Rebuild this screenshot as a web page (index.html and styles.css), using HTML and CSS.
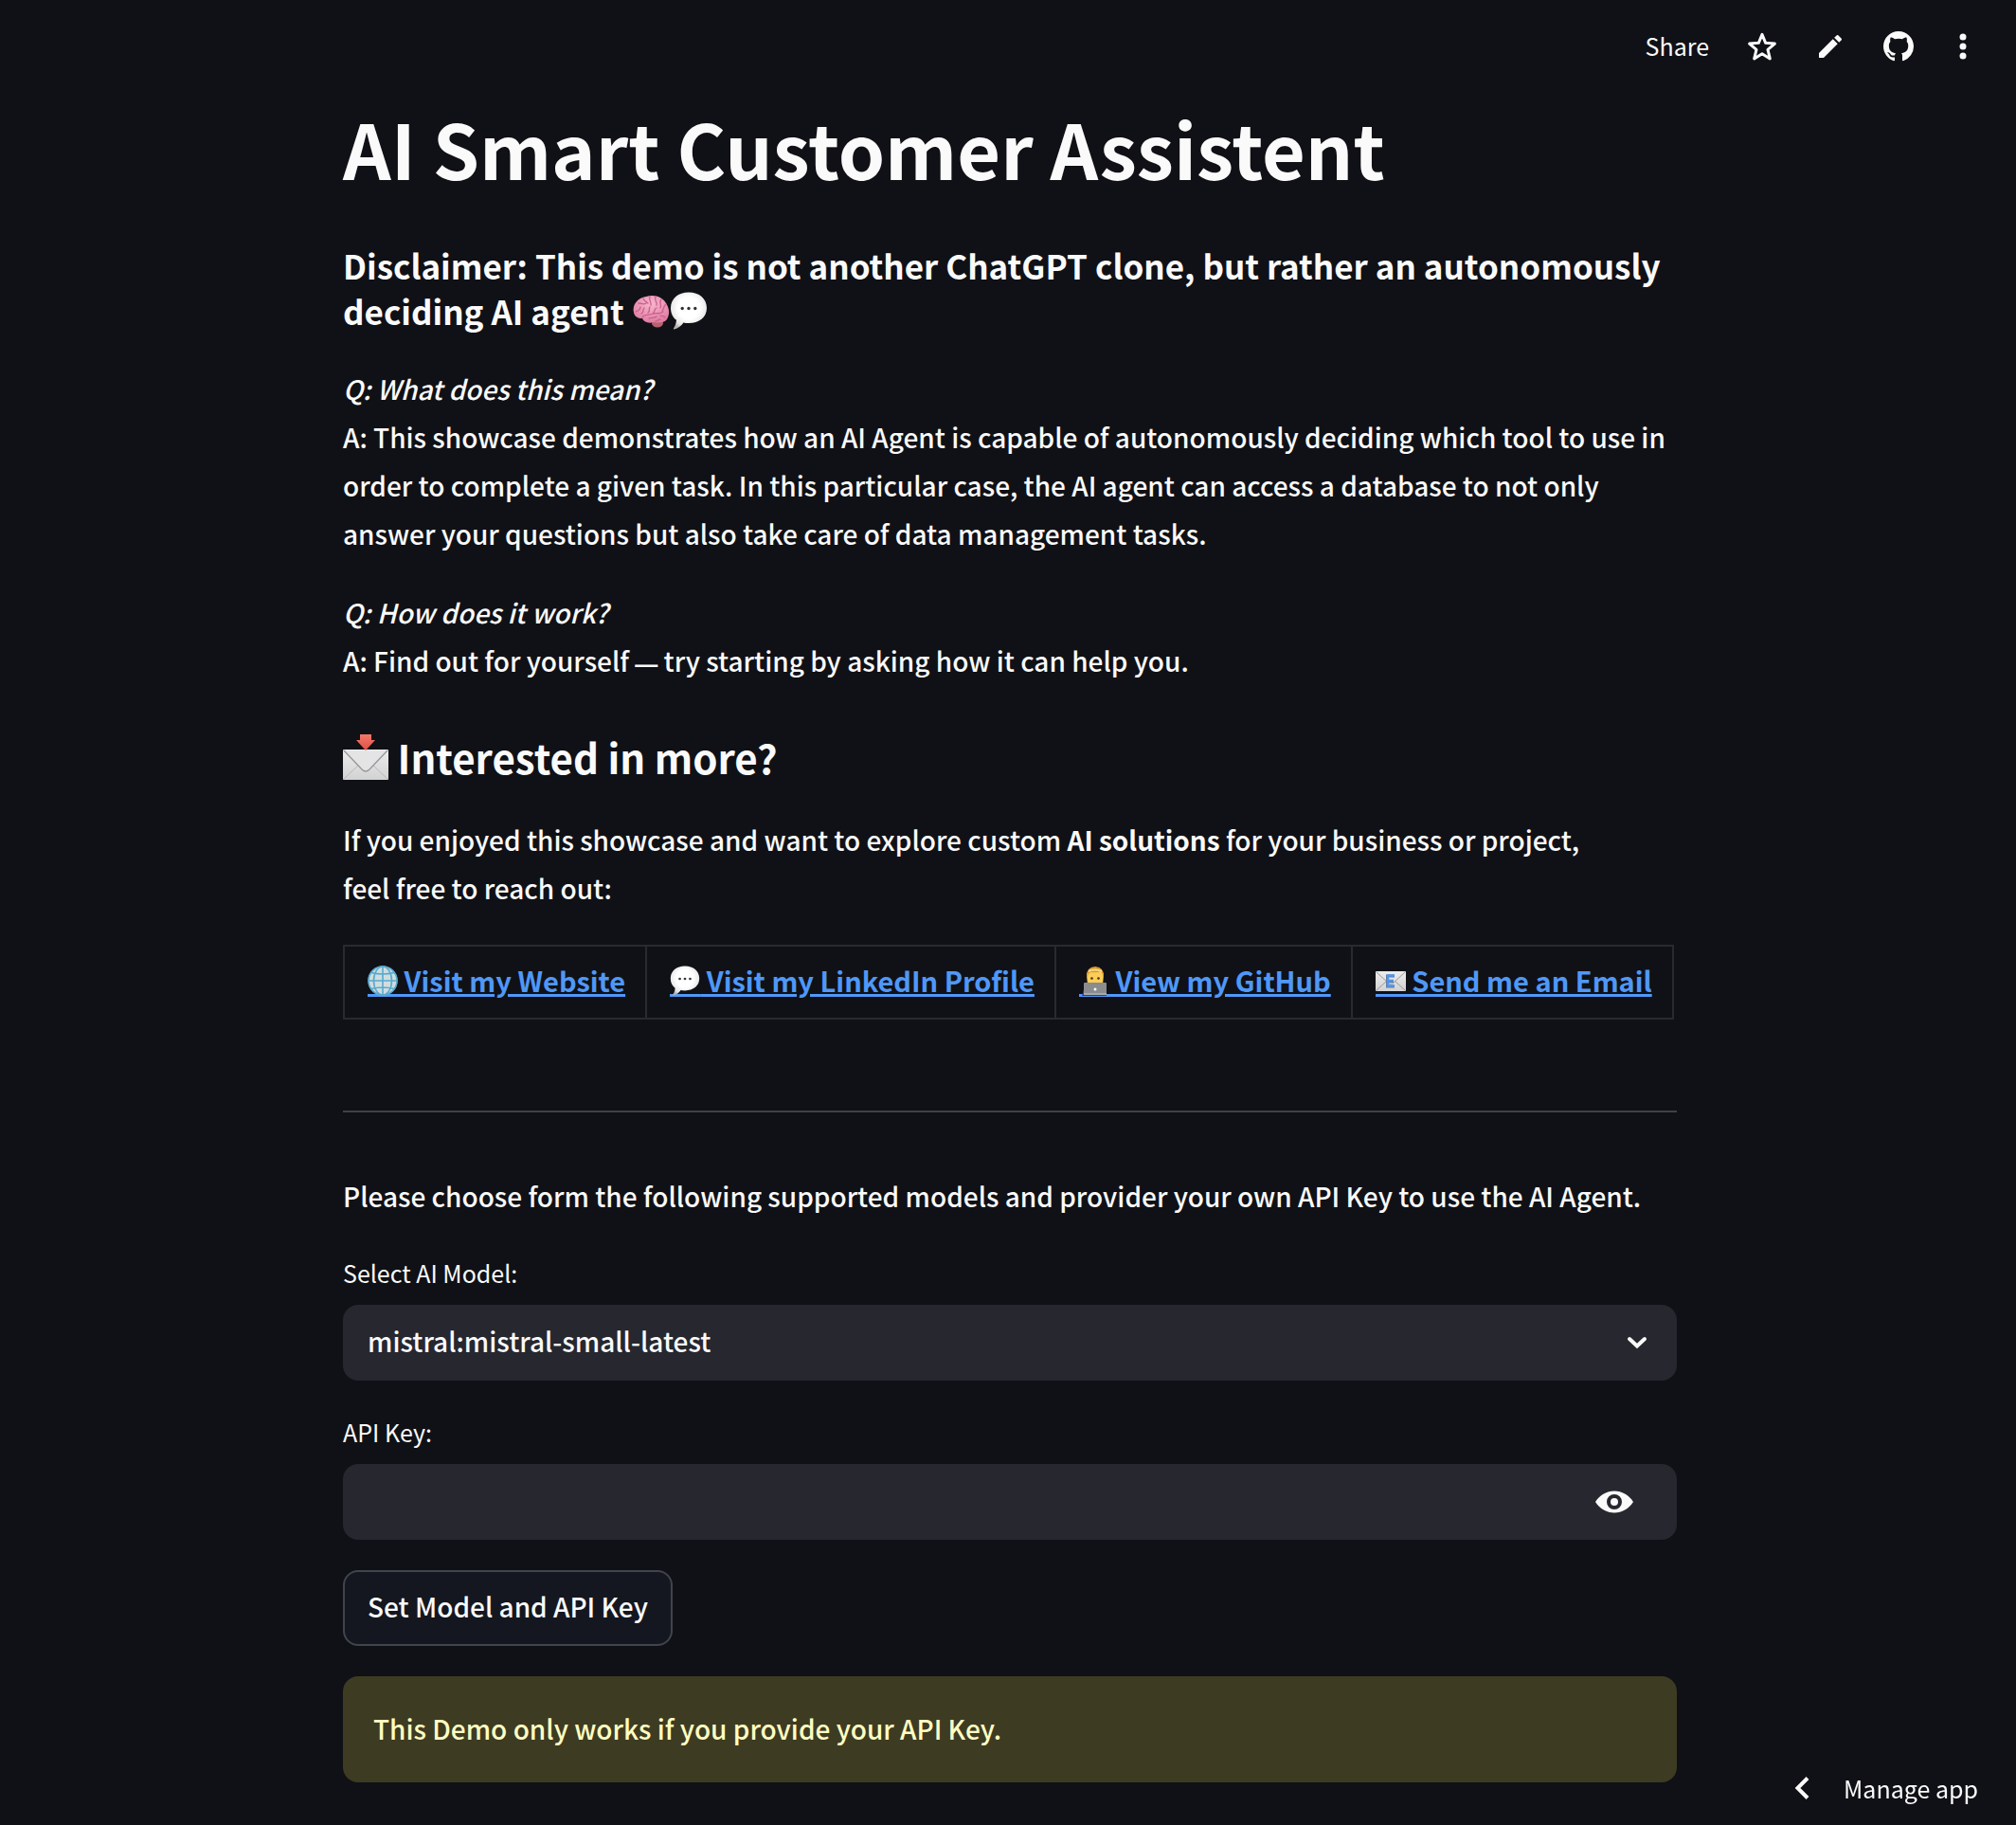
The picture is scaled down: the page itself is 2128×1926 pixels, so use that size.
FILE: index.html
```html
<!DOCTYPE html>
<html lang="en">
<head>
<meta charset="utf-8">
<meta name="viewport" content="width=device-width, initial-scale=1">
<title>AI Smart Customer Assistent</title>
<link rel="stylesheet" href="styles.css">
</head>
<body>
<svg class="defs" aria-hidden="true">
  <defs>
    <radialGradient id="bubble-fill" cx=".5" cy=".42" r=".6">
      <stop offset=".5" stop-color="#fff"/><stop offset=".85" stop-color="#e6e6e6"/><stop offset="1" stop-color="#b4b4b4"/>
    </radialGradient>
    <linearGradient id="paper" x1="0" y1="0" x2="0" y2="1">
      <stop offset="0" stop-color="#ececec"/><stop offset="1" stop-color="#d2d2d2"/>
    </linearGradient>
    <radialGradient id="brain-fill" cx=".5" cy=".3" r=".7">
      <stop offset="0" stop-color="#f9b6cd"/><stop offset="1" stop-color="#df7ba2"/>
    </radialGradient>
    <linearGradient id="arrow-fill" x1="0" y1="0" x2="0" y2="1">
      <stop offset="0" stop-color="#f3796b"/><stop offset="1" stop-color="#dd5145"/>
    </linearGradient>
    <symbol id="bubble" viewBox="0 0 40 40">
      <path d="M20 .5C31 .5 39 7 39 17S31 33 20 33c-2 0-4-.2-5.600-.6C12.500 35.500 9 38.500 4.500 39.500 4 39.600 3.600 39 4 38.500 5.800 36 6.800 33 7 29.800 3.200 27 1 22.500 1 17 1 7 9 .5 20 .5z" fill="url(#bubble-fill)"/>
      <circle cx="13.200" cy="17.500" r="1.700" fill="#333"/><circle cx="20" cy="17.500" r="1.700" fill="#333"/><circle cx="26.800" cy="17.500" r="1.700" fill="#333"/>
    </symbol>
  </defs>
</svg>

<header class="toolbar">
  <button class="toolbar-btn share" type="button">Share</button>
  <button class="toolbar-btn" type="button" aria-label="Favorite">
    <svg width="32" height="32" viewBox="0 0 32 32"><path d="M16 3.400l3.700 8.900 9.700.8-7.400 6.200 2.300 9.600L16 23.700l-8.300 5.200L10 19.300l-7.400-6.200 9.700-.8z" fill="none" stroke="currentColor" stroke-width="3" stroke-linejoin="round"/></svg>
  </button>
  <button class="toolbar-btn" type="button" aria-label="Edit">
    <svg width="32" height="32" viewBox="0 0 24 24"><path d="M3 17.250V21h3.750L17.810 9.940l-3.750-3.750L3 17.250zM20.710 7.040c.39-.39.39-1.020 0-1.410l-2.340-2.340c-.39-.39-1.020-.39-1.410 0l-1.830 1.830 3.750 3.750 1.830-1.830z" fill="currentColor"/></svg>
  </button>
  <button class="toolbar-btn" type="button" aria-label="GitHub">
    <svg width="32" height="32" viewBox="0 0 16 16"><path d="M8 0C3.580 0 0 3.580 0 8c0 3.540 2.290 6.530 5.470 7.590.4.070.55-.17.55-.38 0-.19-.01-.82-.01-1.490-2.010.37-2.530-.49-2.690-.94-.09-.23-.48-.94-.82-1.130-.28-.15-.68-.52-.01-.53.63-.01 1.080.58 1.230.82.72 1.210 1.870.87 2.330.66.07-.52.28-.87.51-1.070-1.780-.2-3.640-.89-3.640-3.950 0-.87.31-1.590.82-2.150-.08-.2-.36-1.020.08-2.120 0 0 .67-.21 2.200.82.64-.18 1.320-.27 2-.27s1.360.09 2 .27c1.530-1.040 2.200-.82 2.200-.82.44 1.100.16 1.920.08 2.120.51.56.82 1.270.82 2.150 0 3.070-1.870 3.750-3.650 3.950.29.25.54.73.54 1.480 0 1.070-.01 1.930-.01 2.200 0 .21.15.46.55.38A8.010 8.010 0 0 0 16 8c0-4.420-3.580-8-8-8z" fill="currentColor"/></svg>
  </button>
  <button class="toolbar-btn" type="button" aria-label="Main menu">
    <svg width="24" height="32" viewBox="0 0 24 32"><circle cx="12" cy="6" r="3.500" fill="currentColor"/><circle cx="12" cy="16" r="3.500" fill="currentColor"/><circle cx="12" cy="26" r="3.500" fill="currentColor"/></svg>
  </button>
</header>

<main class="content">
  <h1>AI Smart Customer Assistent</h1>

  <h3>Disclaimer: This demo is not another ChatGPT clone, but rather an autonomously deciding AI agent <svg class="emoji emoji-h3" viewBox="0 0 40 40" role="img" aria-label="brain"><ellipse cx="27" cy="33" rx="6" ry="4.500" fill="#b9626c"/><path d="M2 22C0 14 6 6 15 5 24 2 33 6 36 12c4 6 4 12 1 17-3 4-9 4-14 3-6 2-11-1-12-4-5 0-8-2-9-6z" fill="url(#brain-fill)"/><g fill="none" stroke="#c9608a" stroke-width="1.300" stroke-linecap="round"><path d="M4 21c3-1 5-2 5-5M7 12c3 0 5 2 8 0M12 7c1 3 3 3 5 5M19 5c-2 4 2 5 1 9M25 5c-2 4 2 5 1 9M31 8c-3 3 1 5-1 9M36 13c-3 2-2 5-4 7M11 27c2-4 7-2 11-4 4-1 7 1 11-2M13 17c-2 3 0 4-3 6M19 16c-2 2 1 4-2 6M26 17c-3 1-1 4-4 6M18 28c3-1 6 0 8-2M30 25c2 1 4 0 5 2M25 31c2 0 3-2 5-2"/></g></svg><svg class="emoji emoji-h3" viewBox="0 0 40 40" role="img" aria-label="speech balloon"><use href="#bubble" width="40" height="40"/></svg></h3>

  <p><em>Q: What does this mean?</em><br>
  A: This showcase demonstrates how an AI Agent is capable of autonomously deciding which tool to use in order to complete a given task. In this particular case, the AI agent can access a database to not only answer your questions but also take care of data management tasks.</p>

  <p><em>Q: How does it work?</em><br>
  A: Find out for yourself <span class="dash">—</span> try starting by asking how it can help you.</p>

  <h2><svg class="emoji emoji-h2" viewBox="0 0 48 48" role="img" aria-label="envelope with arrow"><rect y="16" width="48" height="32" rx="1" fill="url(#paper)"/><path d="M1 47l17-16M47 47L30 31" stroke="#b9b9bc" stroke-width="1" fill="none"/><path d="M1 17l19 20q4 4 8 0l19-20" stroke="#96979d" stroke-width="1.300" fill="#e4e4e5"/><path d="M18 0h12v6h4L24 17 14 6h4z" fill="url(#arrow-fill)"/></svg> Interested in more?</h2>

  <p>If you enjoyed this showcase and want to explore custom <strong>AI solutions</strong> for your business or project,<br>
  feel free to reach out:</p>

  <table class="links">
    <tbody>
      <tr>
        <td><a href="#website"><svg class="emoji emoji-link" viewBox="0 0 32 34" role="img" aria-label="globe"><path d="M0 30h32v3H0z" fill="currentColor"/><circle cx="16" cy="16" r="15.500" fill="#cfdde0"/><g fill="none" stroke="#58a9ce" stroke-width="1.600"><circle cx="16" cy="16" r="15"/><ellipse cx="16" cy="16" rx="9.500" ry="15"/><path d="M16 1v30M1 16h30M4 7.500q12 3 24 0M4 24.500q12-3 24 0"/></g></svg> Visit my Website</a></td>
        <td><a href="#linkedin"><svg class="emoji emoji-link" viewBox="0 0 32 34" role="img" aria-label="speech balloon"><path d="M0 30h32v3H0z" fill="currentColor"/><use href="#bubble" width="32" height="32"/></svg> Visit my LinkedIn Profile</a></td>
        <td><a href="#github"><svg class="emoji emoji-link" viewBox="0 0 32 34" role="img" aria-label="technologist"><path d="M0 30h32v3H0z" fill="currentColor"/><path d="M3 32l2-7q11-5 22 0l2 7z" fill="#2d3aa8"/><path d="M8 12Q7 2 17 1q10 1 9 11l-1 8H9z" fill="#d99c34"/><path d="M9 11q1-4 5-4 6 1 9-1 2 2 2 6v4q-1 8-8 8t-8-8z" fill="#fbce58"/><circle cx="13.500" cy="13.500" r="1.300" fill="#4b3216"/><circle cx="20.500" cy="13.500" r="1.300" fill="#4b3216"/><path d="M10 6q6-3 14 0" stroke="#f6dc91" stroke-width="2" fill="none"/><rect x="5" y="18" width="24" height="13" rx="1" fill="#8b8c8e"/><path d="M5 29h24v2H5z" fill="#a9aaab"/><circle cx="17" cy="25" r="1.500" fill="#fff"/></svg> View my GitHub</a></td>
        <td><a href="#email"><svg class="emoji emoji-link" viewBox="0 0 32 34" role="img" aria-label="e-mail"><path d="M0 30h32v3H0z" fill="currentColor"/><rect y="6" width="32" height="21" rx="1" fill="url(#paper)"/><path d="M1 7l13 12h4L31 7M1 26l11-10M31 26L20 16" stroke="#9a9a9d" stroke-width="1" fill="none"/><path d="M20 11h-7.500v11H20M12.500 16.500H19" stroke="#66788c" stroke-width="3" fill="none"/><path d="M20 10.500h-7v11h7M13 16h6" stroke="#4f95ee" stroke-width="2.500" fill="none"/></svg> Send me an Email</a></td>
      </tr>
    </tbody>
  </table>

  <hr>

  <p>Please choose form the following supported models and provider your own API Key to use the AI Agent.</p>

  <form class="settings">
    <label for="model">Select AI Model:</label>
    <div class="select-box">
      <select id="model"><option>mistral:mistral-small-latest</option></select>
      <svg class="chevron" width="24" height="16" viewBox="0 0 24 16" aria-hidden="true"><path d="M4 4l8 7.500L20 4" fill="none" stroke="currentColor" stroke-width="4" stroke-linecap="round"/></svg>
    </div>

    <label for="api-key">API Key:</label>
    <div class="key-box">
      <input id="api-key" type="password" autocomplete="off">
      <button class="reveal" type="button" aria-label="Show password text">
        <svg width="40" height="24" viewBox="0 0 40 24"><path d="M0 12C5 4.500 12 .5 20 .5S35 4.500 40 12C35 19.500 28 23.500 20 23.500S5 19.500 0 12z" fill="currentColor"/><circle cx="20" cy="12" r="6" fill="none" stroke="#26272f" stroke-width="4"/></svg>
      </button>
    </div>

    <button class="submit" type="button">Set Model and API Key</button>
  </form>

  <div class="alert" role="alert">This Demo only works if you provide your API Key.</div>
</main>

<button class="manage" type="button">
  <svg width="16" height="26" viewBox="0 0 16 26" aria-hidden="true"><path d="M14 2.500L3.500 13 14 23.500" fill="none" stroke="currentColor" stroke-width="4"/></svg>
  Manage app
</button>
</body>
</html>
```
FILE: styles.css
```css
* {
  box-sizing: border-box;
}

body {
  margin: 0;
  background: #101116;
  color: #fafafa;
  font-family: "Noto Sans CJK SC", "Open Sans", sans-serif;
  font-size: 28px;
  font-weight: 500;
  line-height: 51px;
}

button,
input,
select {
  margin: 0;
  border: 0;
  background: none;
  color: inherit;
  font: inherit;
}

button {
  cursor: pointer;
}

.defs {
  position: absolute;
  width: 0;
  height: 0;
}

/* Top toolbar */
.toolbar {
  display: flex;
  justify-content: flex-end;
  align-items: center;
  gap: 40px;
  height: 98px;
  padding-right: 44px;
}

.toolbar-btn {
  display: flex;
  padding: 0;
}

.share {
  padding-bottom: 2px;
  font-size: 25px;
  font-weight: 400;
  line-height: 40px;
}

/* Main column */
.content {
  max-width: 1412px;
  margin: 0 auto;
  padding: 5px 0 44px 4px;
}

h1,
h2,
h3,
p {
  margin: 0;
}

h1 {
  margin-bottom: 48px;
  font-size: 79px;
  line-height: 105px;
}

h3 {
  margin-bottom: 33px;
  font-size: 35px;
  line-height: 48px;
}

h2 {
  margin: 44px 0 33px;
  font-size: 42px;
  line-height: 58px;
}

p + p {
  margin-top: 32px;
}

.dash {
  font-family: "Liberation Sans", sans-serif;
  font-size: 24px;
  font-weight: 700;
}

.emoji {
  overflow: visible;
}

.emoji-h3 {
  width: 40px;
  height: 40px;
  vertical-align: -5px;
}

.emoji-h2 {
  width: 48px;
  height: 48px;
  vertical-align: -6px;
}

.emoji-link {
  width: 32px;
  height: 34px;
  vertical-align: -6px;
}

/* Contact links */
.links {
  margin-top: 34px;
  border-collapse: collapse;
}

.links td {
  padding: 10px 21px 14px 24px;
  border: 2px solid #292a2f;
  font-size: 29px;
  white-space: nowrap;
}

.links a {
  color: #4f98f8;
  font-weight: 700;
  text-decoration: underline;
  text-decoration-thickness: 3px;
  text-underline-offset: 2px;
}

hr {
  height: 2px;
  margin: 96px 0 63px;
  border: 0;
  background: #404146;
}

/* Model and key form */
.settings {
  display: flex;
  flex-direction: column;
  margin-top: 35px;
}

.settings label {
  margin-bottom: 14px;
  font-size: 25px;
  font-weight: 400;
  line-height: 40px;
}

.select-box,
.key-box {
  height: 80px;
  border-radius: 16px;
  background: #26272f;
}

.select-box {
  display: grid;
  align-items: center;
  margin-bottom: 34px;
}

.select-box select {
  grid-area: 1 / 1;
  width: 100%;
  height: 80px;
  padding: 0 80px 4px 26px;
  appearance: none;
}

.chevron {
  grid-area: 1 / 1;
  justify-self: end;
  margin-right: 30px;
  pointer-events: none;
}

.key-box {
  display: flex;
  align-items: center;
  margin-bottom: 32px;
}

.key-box input {
  flex: 1;
  height: 80px;
  padding: 0 26px;
}

.reveal {
  display: flex;
  padding: 0;
  margin-right: 46px;
}

.submit {
  align-self: flex-start;
  height: 80px;
  padding: 0 24px 4px;
  border: 2px solid #41444c;
  border-radius: 16px;
  background: #141720;
}

.alert {
  margin-top: 32px;
  padding: 30px 32px 31px;
  border-radius: 16px;
  background: #3e3b23;
  color: #ffffc2;
}

/* Floating app control */
.manage {
  position: fixed;
  right: 40px;
  bottom: 19px;
  display: flex;
  align-items: center;
  gap: 36px;
  padding: 0;
  font-size: 25px;
  font-weight: 400;
  line-height: 40px;
}
```
